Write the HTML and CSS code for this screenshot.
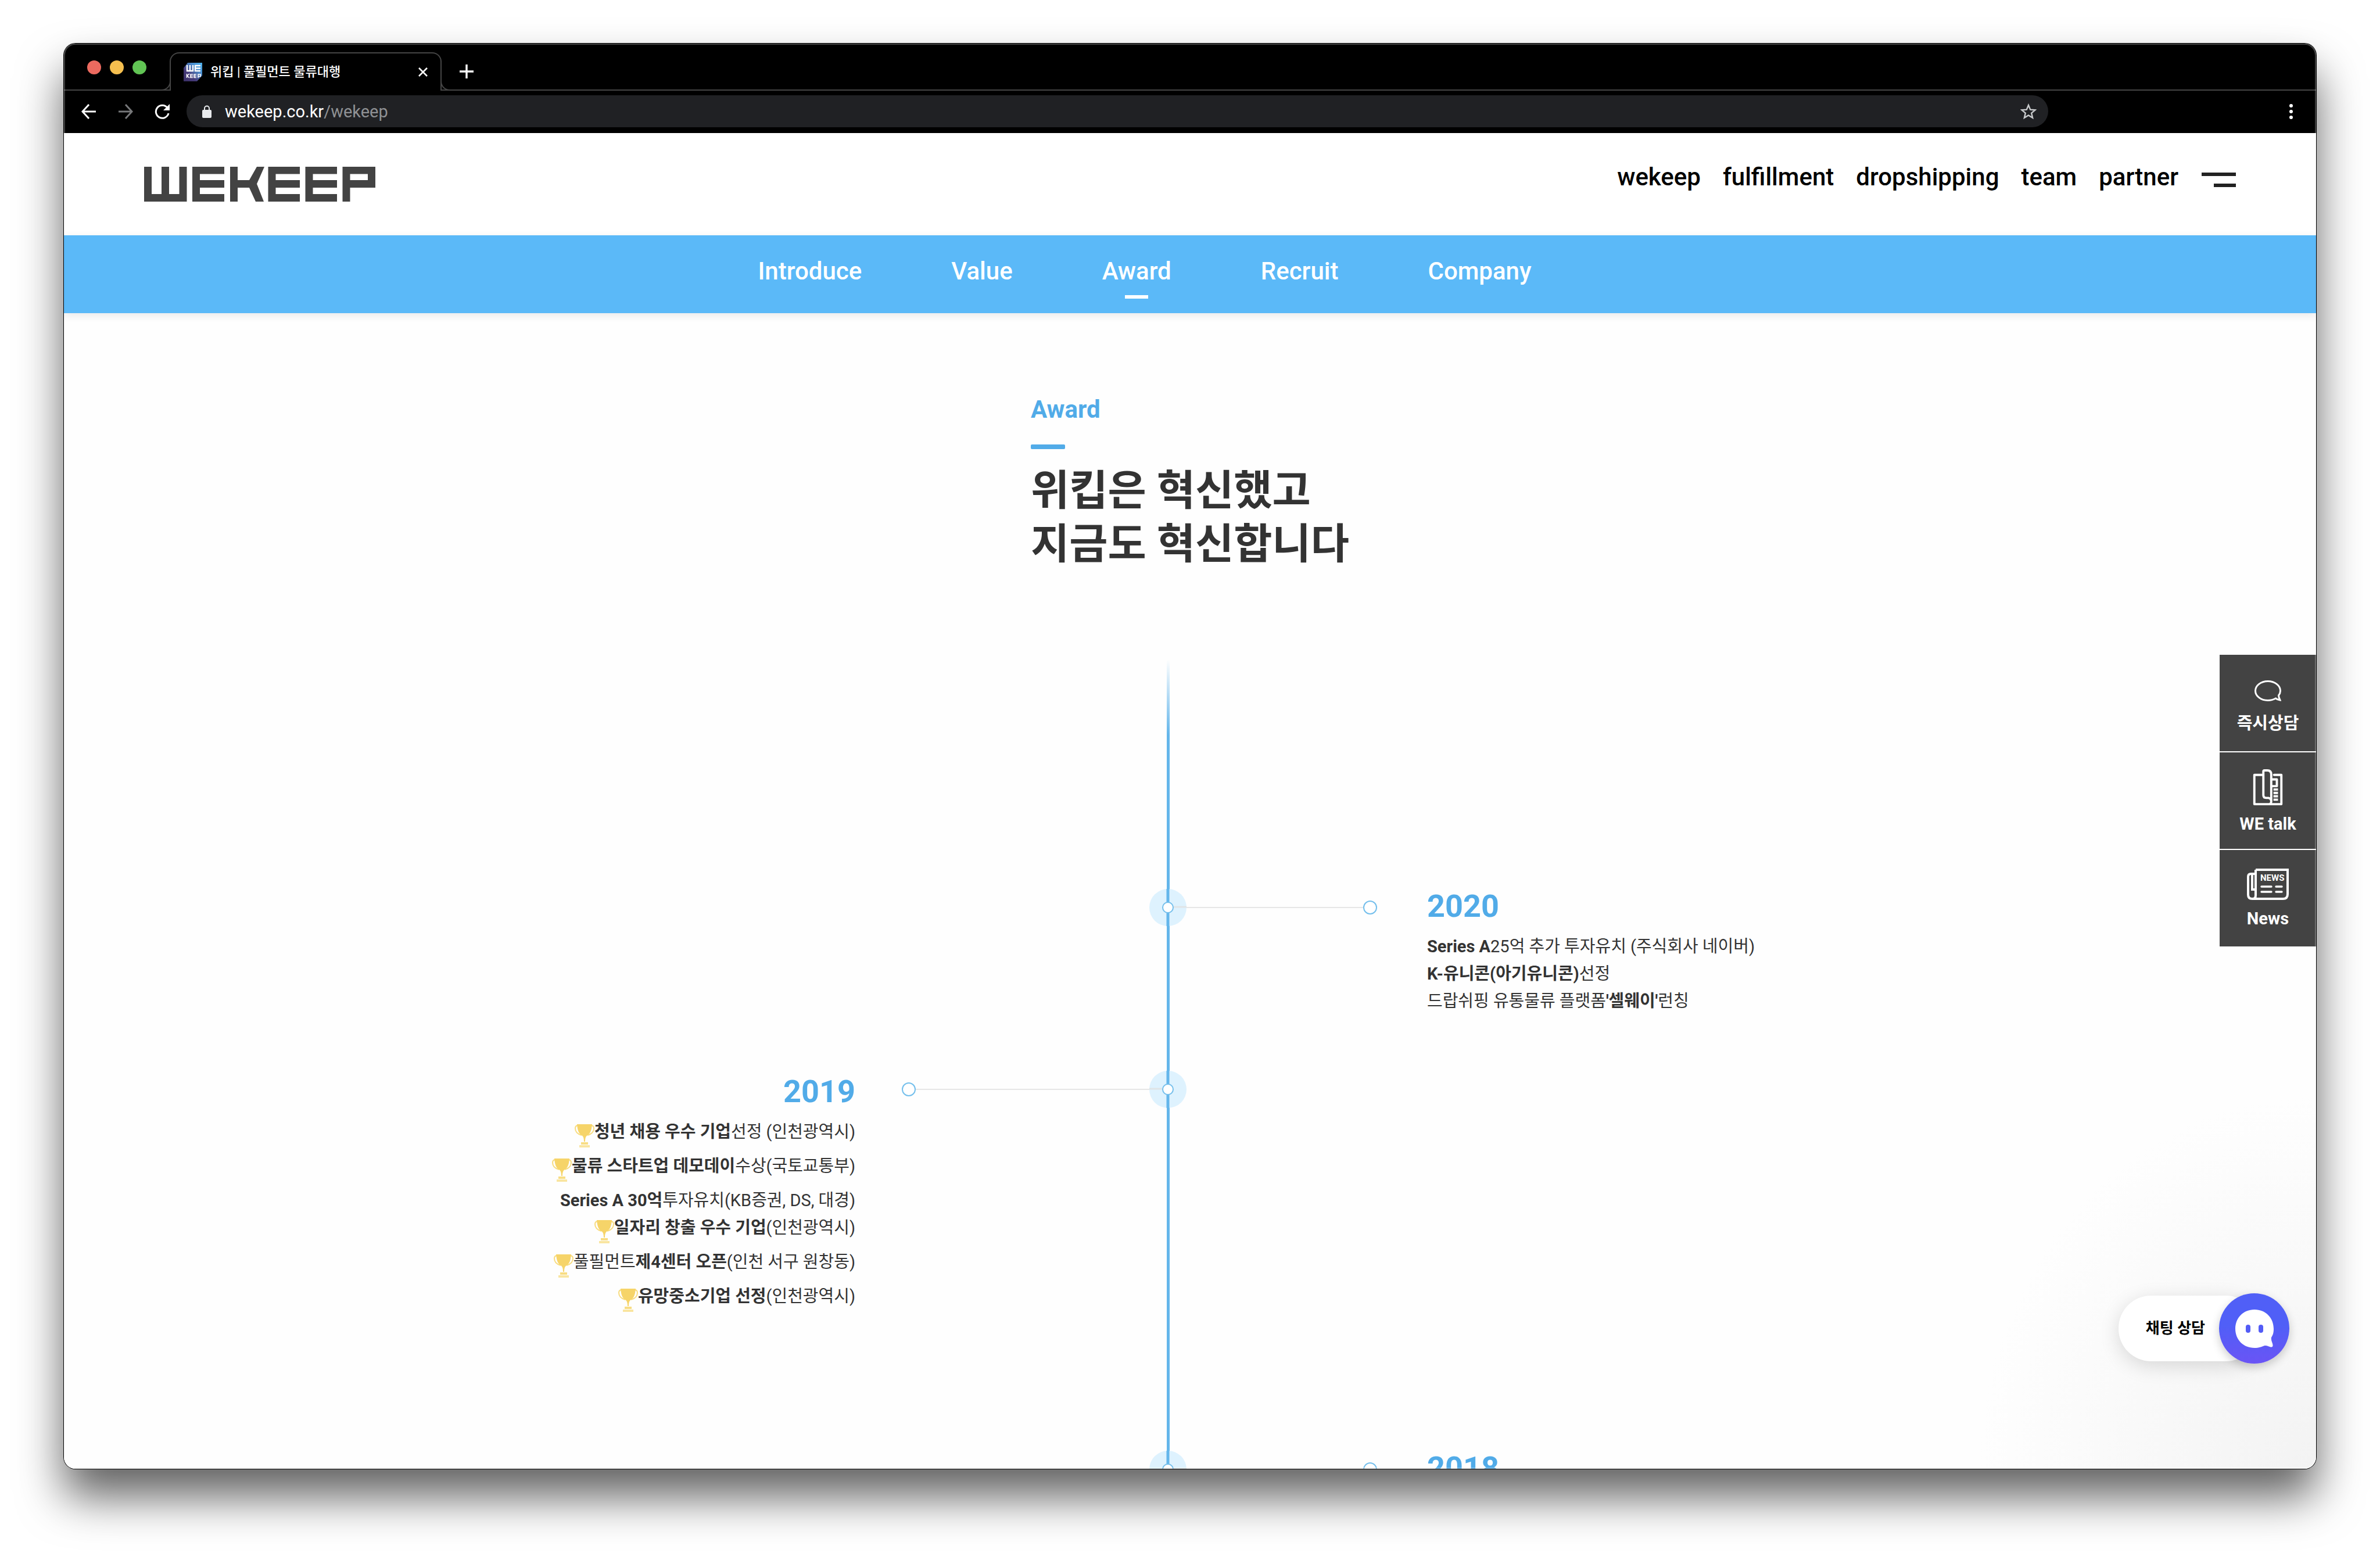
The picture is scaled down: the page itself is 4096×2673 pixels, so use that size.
FILE: index.html
```html
<!DOCTYPE html>
<html lang="ko">
<head>
<meta charset="utf-8">
<title>위킵 | 풀필먼트 물류대행</title>
<link rel="stylesheet" href="styles.css">
</head>
<body>
<svg class="defs" aria-hidden="true">
  <symbol id="trophy" viewBox="0 0 34 40">
    <g fill="none" stroke="#f8dc7f" stroke-width="2">
      <path d="M7 3C3 1 1 4 1 7c0 6 4 10 11 12"/>
      <path d="M27 3c4-2 6 1 6 4 0 6-4 10-11 12"/>
    </g>
    <path fill="#f6d469" d="M4 0h26c-1 11-3 16-8 19-3 2-4 5-4 11h-2c0-6-1-9-4-11C7 16 5 11 4 0z"/>
    <path fill="#f8dd83" d="M11 31h12v4H11z"/>
    <path fill="#f9e5a0" d="M8 36h18v4H8z"/>
  </symbol>
  <symbol id="node" viewBox="0 0 64 64">
    <circle cx="32" cy="32" r="32" fill="#def2fe"/>
    <path d="M32 31h32" stroke="#dfe4e7" stroke-width="3"/>
    <path d="M32 0v64" stroke="#64b6eb" stroke-width="5"/>
    <circle cx="32" cy="32" r="9" fill="#fff" stroke="#74bfec" stroke-width="2"/>
  </symbol>
</svg>

<div class="window">
  <div class="tabstrip">
    <div class="lights">
      <button class="light light--close" aria-label="Close window"></button>
      <button class="light light--min" aria-label="Minimize window"></button>
      <button class="light light--max" aria-label="Zoom window"></button>
    </div>
    <div class="tab">
      <svg class="favicon" viewBox="0 0 32 32" aria-hidden="true">
        <defs><linearGradient id="fav" x1="1" y1="0" x2="0" y2="1"><stop offset="0" stop-color="#4fb4ee"/><stop offset=".3" stop-color="#4a8fd0"/><stop offset=".65" stop-color="#453a78"/><stop offset="1" stop-color="#3a2f66"/></linearGradient></defs>
        <path fill="url(#fav)" d="M7 0h25v22l-9 10H0V9z"/>
        <g fill="none" stroke="#fff" stroke-width="2.4">
          <path d="M6 4v10h10V4M11 4v10M29 5H20v9h9M20 9.500h9"/>
        </g>
        <g fill="none" stroke="#fff" stroke-width="1.6">
          <path d="M5.500 19v7M10 19l-4 3.500 4 3.500M16 20h-4v5.500h4M12 22.700h4M22 20h-4v5.500h4M18 22.700h4M25 26v-6h4v3.500h-4"/>
        </g>
      </svg>
      <span class="tab-title">위킵 | 풀필먼트 물류대행</span>
      <button class="tab-close" aria-label="Close tab"><svg viewBox="0 0 16 16"><path d="M1 1l14 14M15 1L1 15" stroke="#fff" stroke-width="2.600"/></svg></button>
    </div>
    <button class="newtab" aria-label="New tab"><svg viewBox="0 0 24 24"><path d="M12 0v24M0 12h24" stroke="#fff" stroke-width="3.400"/></svg></button>
  </div>

  <div class="toolbar">
    <button class="tool" aria-label="Back"><svg viewBox="0 0 26 26"><path d="M25 13H2M13 1L2 13l11 12" fill="none" stroke="#fff" stroke-width="3"/></svg></button>
    <button class="tool" aria-label="Forward"><svg viewBox="0 0 26 26"><path d="M1 13h23M13 1l11 12-11 12" fill="none" stroke="#77787a" stroke-width="3"/></svg></button>
    <button class="tool" aria-label="Reload"><svg viewBox="0 0 26 26"><path d="M22 6.500A11 11 0 1 0 24 16" fill="none" stroke="#fff" stroke-width="3"/><path d="M26 0v11H15z" fill="#fff"/></svg></button>
    <div class="omnibox">
      <svg class="lock" viewBox="0 0 16 22" aria-hidden="true"><path d="M4 9V5.500a4 4 0 0 1 8 0V9" fill="none" stroke="#e8eaed" stroke-width="2"/><rect y="8" width="16" height="14" rx="2" fill="#e8eaed"/></svg>
      <span class="url">wekeep.co.kr<span class="url-path">/wekeep</span></span>
      <button class="star" aria-label="Bookmark"><svg viewBox="0 0 28 28"><path d="M14 3l3.200 7.600 8.300.7-6.300 5.400 1.900 8.100L14 20.500l-7.100 4.300 1.900-8.100-6.300-5.400 8.300-.7z" fill="none" stroke="#c8cacc" stroke-width="2.400"/></svg></button>
    </div>
    <button class="kebab" aria-label="Menu"><svg viewBox="0 0 6 26"><circle cx="3" cy="3" r="3"/><circle cx="3" cy="13" r="3"/><circle cx="3" cy="23" r="3"/></svg></button>
  </div>

  <header class="site-header">
    <a class="logo" href="#" aria-label="WEKEEP">
      <svg viewBox="0 0 398 60">
        <g fill="none" stroke="#434343" stroke-width="13">
          <path d="M6.500 0v53.500h60.500V0M36.500 0v50"/>
          <path d="M138 6H89.500v47.500H138M89.500 29.500H138"/>
          <path d="M154.500 0v60M154 29.500h30"/>
          <path d="M268 6h-48v47.500h48M220 29.500h48"/>
          <path d="M332 6h-48v47.500h48M284 29.500h48"/>
          <path d="M348 60V6h43.500v23.500H348"/>
        </g>
        <path fill="#434343" d="M194 0h13l-13 29.500L206 60h-14l-11-24V23z"/>
      </svg>
    </a>
    <nav class="main-nav">
      <a href="#">wekeep</a>
      <a href="#">fulfillment</a>
      <a href="#">dropshipping</a>
      <a href="#">team</a>
      <a href="#">partner</a>
    </nav>
    <button class="burger" aria-label="Open menu"><span></span><span></span></button>
  </header>

  <nav class="sub-nav">
    <a href="#">Introduce</a>
    <a href="#">Value</a>
    <a href="#" class="is-active">Award</a>
    <a href="#">Recruit</a>
    <a href="#">Company</a>
  </nav>

  <main class="page">
    <div class="title">
      <p class="title-label">Award</p>
      <h1>위킵은 혁신했고<br>지금도 혁신합니다</h1>
    </div>

    <div class="timeline">
      <section class="entry entry--right">
        <svg class="node" aria-hidden="true"><use href="#node"/></svg>
        <div class="connector"></div>
        <div class="body">
          <h2>2020</h2>
          <ul>
            <li><span><b>Series A</b>25억 추가 투자유치 (주식회사 네이버)</span></li>
            <li><span><b>K-유니콘(아기유니콘)</b>선정</span></li>
            <li><span>드랍쉬핑 유통물류 플랫폼<b>'셀웨이'</b>런칭</span></li>
          </ul>
        </div>
      </section>

      <section class="entry entry--left">
        <svg class="node" aria-hidden="true"><use href="#node"/></svg>
        <div class="connector"></div>
        <div class="body">
          <h2>2019</h2>
          <ul>
            <li class="award"><svg class="trophy" aria-hidden="true"><use href="#trophy"/></svg><span><b>청년 채용 우수 기업</b>선정 (인천광역시)</span></li>
            <li class="award"><svg class="trophy" aria-hidden="true"><use href="#trophy"/></svg><span><b>물류 스타트업 데모데이</b>수상(국토교통부)</span></li>
            <li><span><b>Series A 30억</b>투자유치(KB증권, DS, 대경)</span></li>
            <li class="award"><svg class="trophy" aria-hidden="true"><use href="#trophy"/></svg><span><b>일자리 창출 우수 기업</b>(인천광역시)</span></li>
            <li class="award"><svg class="trophy" aria-hidden="true"><use href="#trophy"/></svg><span>풀필먼트<b>제4센터 오픈</b>(인천 서구 원창동)</span></li>
            <li class="award"><svg class="trophy" aria-hidden="true"><use href="#trophy"/></svg><span><b>유망중소기업 선정</b>(인천광역시)</span></li>
          </ul>
        </div>
      </section>

      <section class="entry entry--right entry--late">
        <svg class="node" aria-hidden="true"><use href="#node"/></svg>
        <div class="connector"></div>
        <div class="body"><h2>2018</h2></div>
      </section>
    </div>

    <aside class="quick">
      <a href="#">
        <svg class="quick-bubble" viewBox="0 0 46 36" aria-hidden="true"><path d="M36.500 31C33 33 28 34.500 23 34.500 11 34.500 1.500 27 1.500 18S11 1.500 23 1.500s21.500 7.500 21.500 16.500c0 3-1 5.500-3 8 0 2 1 5 2.500 8-3-.5-5-1-7.500-3z" fill="none" stroke="#fff" stroke-width="3"/></svg>
        즉시상담
      </a>
      <a href="#">
        <svg class="quick-phone" viewBox="0 0 52 64" aria-hidden="true">
          <g fill="none" stroke="#fff" stroke-width="4" stroke-linejoin="round">
            <path d="M16 10H2v52h48V10H37" stroke-linecap="round"/>
            <path d="M32 58V9q0-7-7-7h-5q-2 0-2 2v42q0 5 5 5h4q5 1 5 6t-4 5"/>
            <path d="M33 18h9v12h-9"/>
          </g>
          <path d="M40 34v22" stroke="#fff" stroke-width="8" stroke-dasharray="4 2"/>
        </svg>
        WE talk
      </a>
      <a href="#">
        <svg class="quick-news" viewBox="0 0 72 54" aria-hidden="true">
          <g fill="none" stroke="#fff" stroke-width="4">
            <path d="M15 2h55v42q0 8-8 8H9q-7 0-7-7V14q0-5 5-5h7"/>
            <path d="M15 2v44q0 6-5 6M9 10v26h5"/>
          </g>
          <text x="23" y="21" font-size="15" font-weight="700" fill="#fff">NEWS</text>
          <path d="M25 31h17M50 31h10M25 40h17M50 40h10" stroke="#fff" stroke-width="3.400" stroke-linecap="round"/>
        </svg>
        News
      </a>
    </aside>

    <button class="chat">
      <span class="chat-label">채팅 상담</span>
      <span class="chat-badge">
        <svg viewBox="0 0 66 66" aria-hidden="true"><path fill="#fff" d="M33 0c19 0 33 14 33 33 0 7-1 10-4 15-1 5 2 9 2.500 13 .3 3-1.500 4-4 3.500-3-1-6-3-10-2.500C45 64 41 66 33 66 14 66 0 52 0 33S14 0 33 0z"/><rect x="18" y="26" width="8" height="14" rx="4" fill="#535cf6"/><rect x="40" y="26" width="8" height="14" rx="4" fill="#535cf6"/></svg>
      </span>
    </button>
  </main>
</div>
</body>
</html>
```
FILE: styles.css
```css
* {
  box-sizing: border-box;
}

body {
  margin: 0;
  height: 100vh;
  padding: 75px 110px 145px;
  display: flex;
  overflow: hidden;
  background: #fff;
  color: #333;
  font-family: Roboto, "Noto Sans CJK KR", sans-serif;
}

a {
  color: inherit;
  text-decoration: none;
}

button {
  padding: 0;
  border: 0;
  background: none;
  color: inherit;
  font: inherit;
}

svg {
  display: block;
}

h1,
h2,
p,
ul {
  margin: 0;
  padding: 0;
}

.defs {
  position: absolute;
  width: 0;
  height: 0;
}

/* Window frame */

.window {
  position: relative;
  flex: 1;
  min-width: 0;
  display: flex;
  flex-direction: column;
  overflow: hidden;
  border-radius: 20px;
  background: #fefefe;
  box-shadow: 0 0 0 1px #000, 0 48px 78px rgba(0, 0, 0, 0.62);
}

.window::after {
  content: "";
  position: absolute;
  inset: 0;
  border: 2px solid rgba(255, 255, 255, 0.25);
  border-radius: 20px;
  pointer-events: none;
}

.tabstrip {
  height: 81px;
  display: flex;
  flex: none;
  background: linear-gradient(#454545, #454545) bottom / 100% 2px no-repeat #000;
}

.lights {
  display: flex;
  gap: 15px;
  padding: 29px 0 0 40px;
  width: 182px;
}

.light {
  width: 24px;
  height: 24px;
  border-radius: 50%;
}

.light--close { background: #ec6a5f; }
.light--min { background: #f5bf4f; }
.light--max { background: #61c454; }

.tab {
  position: relative;
  width: 468px;
  height: 66px;
  margin-top: 15px;
  padding: 0 22px;
  display: flex;
  align-items: center;
  border: 2px solid #454545;
  border-bottom: 0;
  border-radius: 16px 16px 0 0;
  background: #000;
}

/* Feet that curve the tab outline into the strip's bottom line */
.tab::before,
.tab::after {
  content: "";
  position: absolute;
  bottom: 0;
  width: 16px;
  height: 16px;
  border-bottom: 2px solid #454545;
  background: #000;
}

.tab::before {
  right: 100%;
  border-right: 2px solid #454545;
  border-bottom-right-radius: 16px;
}

.tab::after {
  left: 100%;
  border-left: 2px solid #454545;
  border-bottom-left-radius: 16px;
}

.favicon {
  width: 32px;
  height: 32px;
}

.tab-title {
  margin-left: 14px;
  color: #fff;
  font-size: 22px;
  font-weight: 500;
  line-height: 32px;
}

.tab-close {
  width: 16px;
  height: 16px;
  margin-left: auto;
}

.newtab {
  width: 24px;
  height: 24px;
  margin: 36px 0 0 31px;
}

.toolbar {
  height: 73px;
  flex: none;
  display: flex;
  align-items: center;
  padding: 0 40px 2px 30px;
  background: #000;
}

.tool {
  width: 26px;
  height: 26px;
  margin-right: 37px;
}

.omnibox {
  flex: 1;
  height: 55px;
  margin: 0 415px 0 -8px;
  padding: 0 20px 0 27px;
  display: flex;
  align-items: center;
  border-radius: 28px;
  background: #202124;
}

.lock {
  width: 16px;
  height: 22px;
}

.url {
  margin-left: 23px;
  color: #fff;
  font-size: 29px;
  line-height: 36px;
}

.url-path {
  color: #8f9194;
}

.star {
  width: 28px;
  height: 28px;
  margin-left: auto;
}

.kebab {
  width: 6px;
  height: 26px;
  fill: #fff;
}

/* Site header */

.site-header {
  height: 176px;
  flex: none;
  display: flex;
  align-items: flex-start;
  gap: 40px;
  padding: 0 138px;
  background: #fff;
}

.logo {
  width: 398px;
  height: 60px;
  margin: 58px auto 0 0;
}

.main-nav {
  display: flex;
  gap: 38px;
  margin-top: 52px;
  color: #000;
  font-size: 42px;
  font-weight: 500;
  line-height: 48px;
}

.burger {
  width: 59px;
  margin-top: 68px;
  display: flex;
  flex-direction: column;
  align-items: flex-end;
  gap: 13px;
}

.burger span {
  width: 100%;
  height: 6px;
  background: #222;
}

.burger span + span {
  width: 38px;
}

.sub-nav {
  position: relative;
  z-index: 1;
  height: 134px;
  flex: none;
  display: flex;
  justify-content: center;
  gap: 154px;
  padding: 38px 156px 0 0;
  background: #5bb9f8;
  box-shadow: 0 4px 14px rgba(0, 0, 0, 0.09);
  color: #fff;
  font-size: 42px;
  font-weight: 500;
  line-height: 48px;
}

.is-active::after {
  content: "";
  display: block;
  width: 40px;
  height: 6px;
  margin: 17px auto 0;
  background: #fff;
}

/* Page */

.page {
  position: relative;
  flex: 1;
  min-height: 0;
  overflow: hidden;
  padding-top: 142px;
  background: radial-gradient(ellipse 580px 640px at bottom right, #f3f3f3, #fefefe);
}

.title {
  width: fit-content;
  margin: 0 auto;
}

.title-label {
  color: #51abe8;
  font-size: 42px;
  font-weight: 700;
  line-height: 48px;
}

.title-label::after {
  content: "";
  display: block;
  width: 59px;
  height: 8px;
  margin-top: 36px;
  border-radius: 2px;
  background: #51abe8;
}

.title h1 {
  margin-top: 26px;
  font-size: 72px;
  font-weight: 700;
  line-height: 92px;
}

.timeline {
  margin: 152px 76px 0 0;
  padding-top: 391px;
  background: linear-gradient(rgba(100, 182, 235, 0), #64b6eb 130px) top center / 5px 100% no-repeat;
}

.entry {
  display: flex;
  align-items: flex-start;
}

.entry--right {
  padding-left: calc(50% - 32px);
}

.entry--left {
  flex-direction: row-reverse;
  margin-top: 96px;
  padding-right: calc(50% - 32px);
}

.entry--late {
  margin-top: 226px;
}

.node {
  flex: none;
  width: 64px;
  height: 64px;
}

.entry--right .node,
.entry--right .connector {
  margin-top: 4px;
}

.entry--left .node {
  transform: scaleX(-1);
}

.connector {
  flex: none;
  width: 328px;
  height: 64px;
  display: flex;
  align-items: center;
}

.entry--left .connector {
  width: 426px;
  flex-direction: row-reverse;
}

.connector::before {
  content: "";
  flex: 1;
  height: 2px;
  background: #e6e6e6;
}

.connector::after {
  content: "";
  width: 20px;
  height: 20px;
  border: 2px solid #74bfec;
  border-radius: 50%;
  background: #fff;
}

.body {
  margin: 2px 0 0 86px;
}

.entry--left .body {
  margin: 4px 80px 0 0;
  text-align: right;
}

.body h2 {
  color: #51abe8;
  font-size: 54px;
  font-weight: 700;
  line-height: 64px;
}

.body ul {
  margin-top: 14px;
  list-style: none;
  font-size: 29px;
  font-weight: 400;
  line-height: 47px;
}

.body li {
  display: flex;
  white-space: nowrap;
}

.entry--left li {
  justify-content: flex-end;
}

.body b {
  font-weight: 700;
}

.award {
  height: 59px;
}

.trophy {
  width: 34px;
  height: 40px;
  margin-top: 10px;
}

/* Floating shortcuts */

.quick {
  position: absolute;
  top: 588px;
  right: 0;
  width: 166px;
  display: grid;
  gap: 2px;
  background: #fff;
}

.quick a {
  height: 166px;
  display: flex;
  flex-direction: column;
  align-items: center;
  justify-content: flex-end;
  gap: 20px;
  padding-bottom: 30px;
  background: #434343;
  color: #fff;
  font-size: 29px;
  font-weight: 700;
  line-height: 36px;
}

.quick-bubble {
  width: 46px;
  height: 36px;
}

.quick-phone {
  width: 52px;
  height: 62px;
  margin-bottom: -6px;
}

.quick-news {
  width: 72px;
  height: 54px;
  margin-bottom: -6px;
}

.quick a:nth-child(2) {
  padding-bottom: 25px;
}

.chat {
  position: absolute;
  right: 46px;
  bottom: 181px;
  display: flex;
  align-items: center;
  color: #000;
}

.chat-label {
  height: 113px;
  margin-right: -68px;
  padding: 0 92px 0 47px;
  border-radius: 56px;
  background: #fff;
  box-shadow: 0 8px 34px rgba(0, 0, 0, 0.14);
  font-size: 26px;
  font-weight: 700;
  line-height: 113px;
}

.chat-badge {
  position: relative;
  width: 121px;
  height: 121px;
  display: grid;
  place-items: center;
  border-radius: 50%;
  background: linear-gradient(#505ff7 45%, #6a54f5);
  box-shadow: 0 6px 16px rgba(0, 0, 0, 0.2);
}

.chat-badge svg {
  width: 66px;
  height: 66px;
}
```
